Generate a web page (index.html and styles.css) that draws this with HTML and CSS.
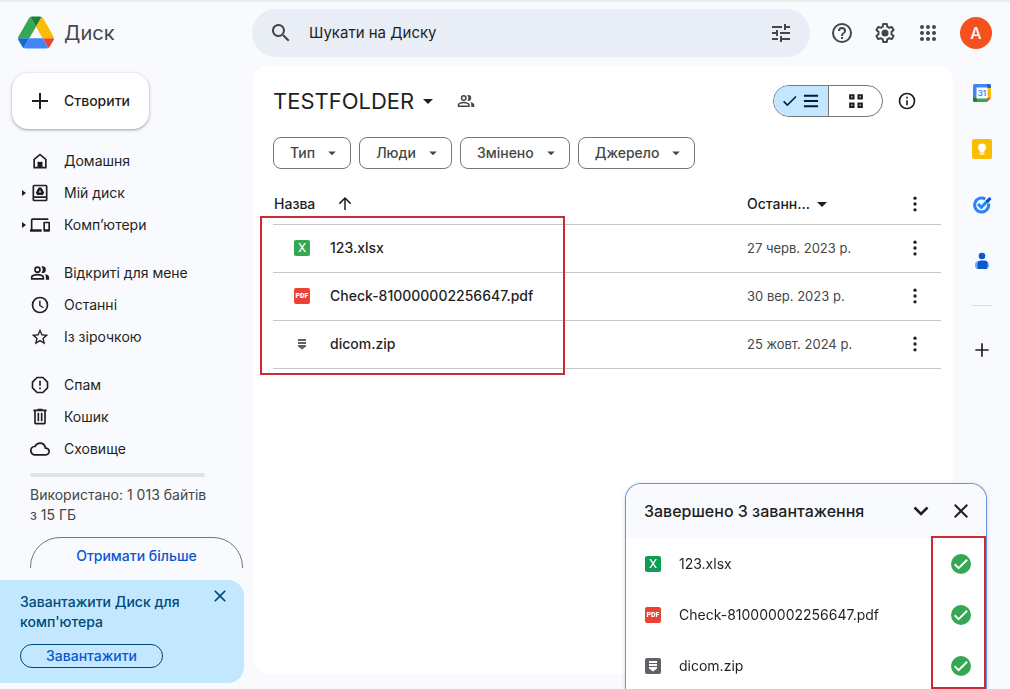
FILE: index.html
```html
<!DOCTYPE html>
<html lang="uk">
<head>
    <meta charset="UTF-8">
    <meta name="viewport" content="width=device-width, initial-scale=1.0">
    <title>TESTFOLDER – Диск</title>
    <link rel="stylesheet" href="styles.css">
</head>
<body>
    <!-- shared icons -->
    <svg class="sprite" aria-hidden="true">
        <symbol id="i-plus" viewBox="0 0 24 24"><path d="M20 13h-7v7h-2v-7H4v-2h7V4h2v7h7z"/></symbol>
        <symbol id="i-caret" viewBox="0 0 24 24"><path d="M7 10l5 5 5-5z"/></symbol>
        <symbol id="i-more" viewBox="0 0 24 24"><circle cx="12" cy="5" r="2"/><circle cx="12" cy="12" r="2"/><circle cx="12" cy="19" r="2"/></symbol>
        <symbol id="i-close" viewBox="0 0 24 24"><path d="M19 6.410L17.590 5 12 10.590 6.410 5 5 6.410 10.590 12 5 17.590 6.410 19 12 13.410 17.590 19 19 17.590 13.410 12z"/></symbol>
        <symbol id="i-people" viewBox="0 0 24 24"><path d="M9 4a4 4 0 1 0 0 8 4 4 0 0 0 0-8zm0 2a2 2 0 1 1 0 4 2 2 0 0 1 0-4zM9 13c-2.700 0-8 1.300-8 4v3h16v-3c0-2.700-5.300-4-8-4zm6 5H3v-1c0-.700 3.100-2 6-2s6 1.300 6 2zM15 12a4 4 0 0 0 0-8c-.500 0-.900.100-1.300.200a6 6 0 0 1 0 7.600c.400.100.800.200 1.300.200zM17.500 13.300c1 .900 1.500 2.100 1.500 3.700v3h4v-3c0-2-2.700-3.200-5.500-3.700z"/></symbol>
        <symbol id="i-archive" viewBox="0 0 16 16"><path d="M4 3h8v2H4zM4 6h8v2H4zM4 9h8v1.500L8 13.500l-4-3z"/></symbol>
        <symbol id="i-done" viewBox="0 0 20 20"><circle cx="10" cy="10" r="10" fill="#34a853"/><path d="M3.700 10.200l3.900 3.900 8.500-8.400" fill="none" stroke="#fff" stroke-width="2"/></symbol>
    </svg>

    <div class="app">
        <header class="topbar">
            <a class="brand" href="#">
                <svg viewBox="0 0 87.300 78" aria-hidden="true">
                    <path fill="#1967d2" d="m6.600 66.850 3.850 6.650c.8 1.400 1.950 2.500 3.300 3.300l13.750-23.800h-27.500c0 1.550.4 3.100 1.200 4.500z"/>
                    <path fill="#34a853" d="m43.650 25-13.750-23.800c-1.350.8-2.500 1.900-3.300 3.300l-25.400 44a9.060 9.060 0 0 0-1.200 4.500h27.500z"/>
                    <path fill="#ea4335" d="m73.550 76.800c1.350-.8 2.500-1.900 3.300-3.300l9.250-16c.8-1.400 1.200-2.950 1.200-4.500h-27.500z"/>
                    <path fill="#188038" d="m43.650 25 13.750-23.800c-1.350-.8-2.900-1.200-4.500-1.200h-18.500c-1.600 0-3.150.45-4.500 1.200z"/>
                    <path fill="#4285f4" d="m59.800 53h-32.300l-13.750 23.800c1.350.8 2.900 1.200 4.500 1.200h50.800c1.600 0 3.150-.45 4.500-1.200z"/>
                    <path fill="#fbbc04" d="m73.400 26.500-12.700-22c-.8-1.400-1.950-2.500-3.300-3.300l-13.750 23.800 16.150 28h27.450c0-1.550-.4-3.100-1.200-4.500z"/>
                </svg>
                <span>Диск</span>
            </a>
            <form class="search" role="search">
                <svg class="icon" viewBox="0 0 24 24" aria-hidden="true"><path d="M15.500 14h-.8l-.3-.3A6.500 6.500 0 1 0 13.700 14.400l.3.300v.8l5 5 1.500-1.500zm-6 0a4.500 4.500 0 1 1 0-9 4.500 4.500 0 0 1 0 9z"/></svg>
                <input type="text" placeholder="Шукати на Диску" aria-label="Шукати на Диску">
                <button type="button" class="icon-btn" aria-label="Розширений пошук">
                    <svg class="icon" viewBox="0 0 24 24"><path d="M3 17v2h6v-2zM3 5v2h10V5zm10 16v-2h8v-2h-8v-2h-2v6zM7 9v2H3v2h4v2h2V9zm14 4v-2H11v2zm-6-4h2V7h4V5h-4V3h-2z"/></svg>
                </button>
            </form>
            <div class="tools">
                <button class="icon-btn" aria-label="Підтримка">
                    <svg class="icon" viewBox="0 0 24 24"><path d="M11 18h2v-2h-2zm1-16a10 10 0 1 0 0 20 10 10 0 0 0 0-20zm0 18a8 8 0 1 1 0-16 8 8 0 0 1 0 16zm0-14a4 4 0 0 0-4 4h2a2 2 0 1 1 4 0c0 2-3 1.750-3 5h2c0-2.250 3-2.500 3-5a4 4 0 0 0-4-4z"/></svg>
                </button>
                <button class="icon-btn" aria-label="Налаштування">
                    <svg class="icon" viewBox="0 0 24 24"><path d="M10.200 3h3.600l.5 2.700 1.900 1.100 2.600-.9 1.800 3.100-2.100 1.800v2.400l2.100 1.800-1.800 3.100-2.600-.9-1.900 1.100-.5 2.700h-3.600l-.5-2.700-1.900-1.100-2.600.9-1.800-3.100 2.100-1.800v-2.400L3.400 9l1.800-3.100 2.600.9 1.900-1.100z" fill="none" stroke="currentColor" stroke-width="2" stroke-linejoin="round"/><circle cx="12" cy="12" r="3.500"/></svg>
                </button>
                <button class="icon-btn" aria-label="Додатки Google">
                    <svg class="icon" viewBox="0 0 24 24"><path d="M6 8a2 2 0 1 0 0-4 2 2 0 0 0 0 4zm6 0a2 2 0 1 0 0-4 2 2 0 0 0 0 4zm6 0a2 2 0 1 0 0-4 2 2 0 0 0 0 4zM6 14a2 2 0 1 0 0-4 2 2 0 0 0 0 4zm6 0a2 2 0 1 0 0-4 2 2 0 0 0 0 4zm6 0a2 2 0 1 0 0-4 2 2 0 0 0 0 4zM6 20a2 2 0 1 0 0-4 2 2 0 0 0 0 4zm6 0a2 2 0 1 0 0-4 2 2 0 0 0 0 4zm6 0a2 2 0 1 0 0-4 2 2 0 0 0 0 4z"/></svg>
                </button>
                <button class="avatar">A</button>
            </div>
        </header>

        <aside class="sidebar">
            <div class="sidebar-scroll">
                <button class="create"><svg class="icon"><use href="#i-plus"/></svg>Створити</button>
                <nav class="nav">
                    <ul>
                        <li><a href="#">
                            <svg class="icon-20" viewBox="0 0 24 24"><path d="M4 21V9.500L12 3l8 6.500V21zM6 19h12v-8.500l-6-5-6 5z"/><path d="M9 13h6v7H9z"/></svg>Домашня</a></li>
                        <li><a href="#" class="expandable">
                            <svg class="icon-20" viewBox="0 0 24 24"><path d="M5 2h14a2 2 0 0 1 2 2v16a2 2 0 0 1-2 2H5a2 2 0 0 1-2-2V4c0-1.100.9-2 2-2zm0 2v12h14V4zm0 14v2h14v-2z"/><path fill-rule="evenodd" d="M10.300 5.500h3.400l3.300 6-1.500 2.800h-7L7 11.500zM12 8.600l-1.500 2.900h3z"/></svg>Мій диск</a></li>
                        <li><a href="#" class="expandable">
                            <svg class="icon-20" viewBox="0 0 24 24"><path d="M3 6h19V4H3a2 2 0 0 0-2 2v11H0v3h14v-3H3zm20 2h-6c-.6 0-1 .4-1 1v10c0 .6.4 1 1 1h6c.6 0 1-.4 1-1V9c0-.6-.4-1-1-1zm-1 9h-4v-7h4z"/></svg>Комп’ютери</a></li>
                    </ul>
                    <ul>
                        <li><a href="#"><svg class="icon-20"><use href="#i-people"/></svg>Відкриті для мене</a></li>
                        <li><a href="#">
                            <svg class="icon-20" viewBox="0 0 24 24"><path d="M12 2a10 10 0 1 0 0 20 10 10 0 0 0 0-20zm0 18a8 8 0 1 1 0-16 8 8 0 0 1 0 16zm.700-13h-1.700v6l4.700 3 .9-1.400-3.900-2.400z"/></svg>Останні</a></li>
                        <li><a href="#">
                            <svg class="icon-20" viewBox="0 0 24 24"><path d="M22 9.240l-7.190-.62L12 2 9.190 8.630 2 9.240l5.460 4.730L5.820 21 12 17.270 18.180 21l-1.630-7.030zM12 15.400l-3.760 2.270 1-4.280-3.320-2.880 4.380-.38L12 6.100l1.710 4.040 4.380.38-3.320 2.880 1 4.280z"/></svg>Із зірочкою</a></li>
                    </ul>
                    <ul>
                        <li><a href="#">
                            <svg class="icon-20" viewBox="0 0 24 24"><path d="M8.500 3h7L21 8.500v7L15.500 21h-7L3 15.500v-7z" fill="none" stroke="currentColor" stroke-width="2" stroke-linejoin="round"/><path d="M11 7h2v6h-2zM11 15h2v2h-2z"/></svg>Спам</a></li>
                        <li><a href="#">
                            <svg class="icon-20" viewBox="0 0 24 24"><path d="M15 3V2H9v1H4v2h1v14a2 2 0 0 0 2 2h10a2 2 0 0 0 2-2V5h1V3zm2 16H7V5h10zM9 7h2v10H9zm4 0h2v10h-2z"/></svg>Кошик</a></li>
                        <li><a href="#">
                            <svg class="icon-20" viewBox="0 0 24 24"><path d="M19.350 10.040A7.490 7.490 0 0 0 12 4C9.110 4 6.600 5.640 5.350 8.040A5.994 5.994 0 0 0 0 14c0 3.310 2.690 6 6 6h13c2.760 0 5-2.240 5-5 0-2.640-2.050-4.780-4.650-4.960zM19 18H6a4 4 0 0 1-.4-7.970l1.070-.11.5-.95A5.469 5.469 0 0 1 12 6c2.620 0 4.880 1.860 5.390 4.430l.3 1.500 1.530.11A2.980 2.980 0 0 1 22 15c0 1.650-1.350 3-3 3z"/></svg>Сховище</a></li>
                    </ul>
                </nav>
                <div class="storage">
                    <div class="storage-bar"></div>
                    <p>Використано: 1 013 байтів з 15 ГБ</p>
                    <button class="get-more">Отримати більше</button>
                </div>
            </div>
            <section class="promo">
                <div class="promo-head">
                    <h2>Завантажити Диск для комп'ютера</h2>
                    <button class="icon-btn" aria-label="Закрити"><svg class="icon-20"><use href="#i-close"/></svg></button>
                </div>
                <button class="promo-btn">Завантажити</button>
            </section>
        </aside>

        <main class="content">
            <div class="content-head">
                <button class="folder">TESTFOLDER<svg class="icon"><use href="#i-caret"/></svg></button>
                <button class="icon-btn shared" aria-label="Керувати доступом"><svg class="icon-18"><use href="#i-people"/></svg></button>
                <div class="view-toggle">
                    <button class="active" aria-label="Список">
                        <svg class="icon-18" viewBox="0 0 24 24"><path d="M3.500 12.500l5 5L20 6" fill="none" stroke="currentColor" stroke-width="2"/></svg>
                        <svg class="icon-20" viewBox="0 0 24 24"><path d="M3.500 4.500h17v2.400h-17zM3.500 10.800h17v2.400h-17zM3.500 17.100h17v2.400h-17z"/></svg>
                    </button>
                    <button aria-label="Сітка">
                        <svg class="icon-20" viewBox="0 0 24 24"><path d="M5 5h4v4H5zM15 5h4v4h-4zM5 15h4v4H5zM15 15h4v4h-4z" fill="none" stroke="currentColor" stroke-width="2.500"/></svg>
                    </button>
                </div>
                <button class="icon-btn" aria-label="Докладніше">
                    <svg class="icon-20" viewBox="0 0 24 24"><path d="M11 7h2v2h-2zm0 4h2v6h-2zm1-9a10 10 0 1 0 0 20 10 10 0 0 0 0-20zm0 18a8 8 0 1 1 0-16 8 8 0 0 1 0 16z"/></svg>
                </button>
            </div>

            <div class="filters">
                <button>Тип<svg class="icon-18"><use href="#i-caret"/></svg></button>
                <button>Люди<svg class="icon-18"><use href="#i-caret"/></svg></button>
                <button>Змінено<svg class="icon-18"><use href="#i-caret"/></svg></button>
                <button>Джерело<svg class="icon-18"><use href="#i-caret"/></svg></button>
            </div>

            <div class="files">
                <table>
                    <thead>
                        <tr>
                            <th class="col-name"><span class="sort">Назва<svg class="icon-18" viewBox="0 0 24 24"><path d="M12 20V4M4.500 11.500L12 4l7.500 7.500" fill="none" stroke="currentColor" stroke-width="2"/></svg></span></th>
                            <th class="col-date"><span class="sort-date">Останн...<svg class="icon"><use href="#i-caret"/></svg></span></th>
                            <th class="col-more"><button class="icon-btn" aria-label="Інші дії"><svg class="icon-20"><use href="#i-more"/></svg></button></th>
                        </tr>
                    </thead>
                    <tbody>
                        <tr>
                            <td><span class="file"><span class="badge xlsx">X</span>123.xlsx</span></td>
                            <td class="date">27 черв. 2023 р.</td>
                            <td><button class="icon-btn" aria-label="Інші дії"><svg class="icon-20"><use href="#i-more"/></svg></button></td>
                        </tr>
                        <tr>
                            <td><span class="file"><span class="badge pdf">PDF</span>Check-810000002256647.pdf</span></td>
                            <td class="date">30 вер. 2023 р.</td>
                            <td><button class="icon-btn" aria-label="Інші дії"><svg class="icon-20"><use href="#i-more"/></svg></button></td>
                        </tr>
                        <tr>
                            <td><span class="file"><span class="badge zip"><svg><use href="#i-archive"/></svg></span>dicom.zip</span></td>
                            <td class="date">25 жовт. 2024 р.</td>
                            <td><button class="icon-btn" aria-label="Інші дії"><svg class="icon-20"><use href="#i-more"/></svg></button></td>
                        </tr>
                    </tbody>
                </table>
                <div class="mark mark-files"></div>
            </div>
        </main>

        <aside class="apps">
            <a href="#" aria-label="Календар">
                <svg class="icon-20" viewBox="0 0 20 20">
                    <path fill="#4285f4" d="M2 1h13v4H5v10H1V2z"/>
                    <path fill="#1967d2" d="M15 1h3l1 1v3h-4z"/>
                    <path fill="#fbbc04" d="M15 5h4v10h-4z"/>
                    <path fill="#34a853" d="M5 15h10v4H5z"/>
                    <path fill="#188038" d="M1 15h4v4H2l-1-1z"/>
                    <path fill="#ea4335" d="M15 15h4l-4 4z"/>
                    <path fill="#fff" d="M4.500 4.500h11v11h-11z"/>
                    <text x="10" y="13" text-anchor="middle" font-size="8" font-weight="600" fill="#4285f4">31</text>
                </svg>
            </a>
            <a href="#" aria-label="Keep">
                <svg class="icon-20" viewBox="0 0 20 20">
                    <rect width="20" height="20" rx="2" fill="#fbbc04"/>
                    <path fill="#fff" d="M10 4.500a4 4 0 0 0-2.300 7.300V13.500h4.600v-1.700A4 4 0 0 0 10 4.500zM7.700 14.200h4.600v1.300H7.700z"/>
                </svg>
            </a>
            <a href="#" aria-label="Завдання">
                <svg class="icon-20" viewBox="0 0 20 20">
                    <path d="M16.500 8.500A7 7 0 1 1 13.300 4" fill="none" stroke="#2684fc" stroke-width="3"/>
                    <path d="M6 9l3.300 3.300L16 5.500" fill="none" stroke="#2684fc" stroke-width="3"/>
                    <path d="M13.500 5.700l4-3.700 2 2-3.500 4.200z" fill="#0057cc"/>
                </svg>
            </a>
            <a href="#" aria-label="Контакти">
                <svg class="icon-20" viewBox="0 0 20 20">
                    <circle cx="10" cy="5" r="3.300" fill="#0b57d0"/>
                    <path fill="#7baaf7" d="M7 10h6a4 4 0 0 1 4 4v2l-2 2H5l-2-2v-2a4 4 0 0 1 4-4z"/>
                    <path fill="#0b57d0" d="M8 9.500h4.500a3 3 0 0 1 3 3V16l-1 2H5.500v-5.500a3 3 0 0 1 2.500-3z"/>
                </svg>
            </a>
            <hr>
            <button class="icon-btn" aria-label="Установити доповнення"><svg class="icon-20"><use href="#i-plus"/></svg></button>
        </aside>
    </div>

    <section class="uploads">
        <header>
            <h2>Завершено 3 завантаження</h2>
            <button class="icon-btn" aria-label="Згорнути">
                <svg class="icon" viewBox="0 0 24 24"><path d="M5.500 8.500L12 15l6.500-6.500" fill="none" stroke="currentColor" stroke-width="2.500"/></svg>
            </button>
            <button class="icon-btn" aria-label="Закрити"><svg class="icon"><use href="#i-close"/></svg></button>
        </header>
        <ul>
            <li><span class="badge xlsx-dark">X</span><span class="name">123.xlsx</span><svg class="icon-20"><use href="#i-done"/></svg></li>
            <li><span class="badge pdf">PDF</span><span class="name">Check-810000002256647.pdf</span><svg class="icon-20"><use href="#i-done"/></svg></li>
            <li><span class="badge zip-dark"><svg><use href="#i-archive"/></svg></span><span class="name">dicom.zip</span><svg class="icon-20"><use href="#i-done"/></svg></li>
        </ul>
        <div class="mark mark-status"></div>
    </section>
</body>
</html>
```
FILE: styles.css
```css
:root {
    --page: #f8fafd;
    --text: #1f1f1f;
    --muted: #444746;
    --outline: #747775;
    --link: #0b57d0;
    --sky: #c2e7ff;
    --navy: #004a77;
    --mark: #cc2a32;
}

* {
    box-sizing: border-box;
}

body {
    margin: 0;
    background: var(--page);
    color: var(--text);
    font-family: Inter, 'Open Sans', 'Liberation Sans', sans-serif;
    font-size: 14px;
    line-height: 20px;
}

button, input {
    font: inherit;
    color: inherit;
}

button {
    background: none;
    border: none;
    padding: 0;
    cursor: pointer;
}

a {
    color: inherit;
    text-decoration: none;
}

ul {
    list-style: none;
    margin: 0;
    padding: 0;
}

h2, p {
    margin: 0;
}

svg {
    fill: currentColor;
    flex: none;
}

.sprite {
    display: none;
}

.icon {
    width: 24px;
    height: 24px;
}

.icon-20 {
    width: 20px;
    height: 20px;
}

.icon-18 {
    width: 18px;
    height: 18px;
}

.icon-btn {
    display: flex;
    align-items: center;
    justify-content: center;
    flex: none;
}

.app {
    display: grid;
    grid-template-columns: 253px 1fr 57px;
    grid-template-rows: 65px 1fr;
    height: 100vh;
    overflow: hidden;
}

/* top bar */
.topbar {
    grid-column: 1 / -1;
    display: flex;
    align-items: center;
    border-top: 2px solid #eceef1;
    padding: 0 18px 2px;
}

.brand {
    display: flex;
    align-items: center;
    gap: 10px;
    width: 234px;
    color: var(--muted);
    font-size: 20px;
}

.brand svg {
    width: 36px;
    height: 33px;
}

.search {
    flex: 1;
    display: flex;
    align-items: center;
    gap: 16px;
    height: 48px;
    padding: 0 17px;
    border-radius: 24px;
    background: #e9eef6;
    color: var(--muted);
}

.search input {
    flex: 1;
    min-width: 0;
    border: none;
    padding: 0;
    background: none;
    font-size: 15px;
    outline: none;
}

.search input::placeholder {
    color: var(--text);
    opacity: 1;
}

.tools {
    display: flex;
    align-items: center;
    gap: 19px;
    margin-left: 20px;
    color: var(--muted);
}

.avatar {
    width: 32px;
    height: 32px;
    margin-left: 1px;
    border-radius: 50%;
    background: #f4511e;
    color: #fff;
    font-size: 16px;
    font-weight: 500;
}

/* sidebar */
.sidebar {
    display: flex;
    flex-direction: column;
    gap: 12px;
    min-height: 0;
    padding-bottom: 6px;
}

.sidebar-scroll {
    flex: 1;
    min-height: 0;
    overflow: hidden;
    padding: 8px 10px 0 12px;
}

.create {
    display: flex;
    align-items: center;
    gap: 12px;
    height: 56px;
    padding: 0 19px 0 16px;
    border-radius: 16px;
    background: #fff;
    box-shadow: 0 1px 2px rgba(60,64,67,.3), 0 1px 3px 1px rgba(60,64,67,.15);
    font-weight: 500;
}

.nav {
    display: flex;
    flex-direction: column;
    gap: 16px;
    margin-top: 16px;
}

.nav a {
    display: flex;
    align-items: center;
    gap: 14px;
    height: 32px;
    padding-left: 18px;
}

.nav .expandable {
    padding-left: 10px;
    gap: 4px;
}

.nav .expandable svg {
    margin-right: 10px;
}

.nav .expandable::before {
    content: '';
    border: 3px solid transparent;
    border-left: 4px solid currentColor;
    border-right: none;
}

.storage {
    padding: 8px 0 0 18px;
}

.storage-bar {
    width: 175px;
    height: 4px;
    border-radius: 2px;
    background: #e1e3e1;
}

.storage p {
    width: 180px;
    margin-top: 8px;
    color: var(--muted);
}

.get-more {
    width: 100%;
    height: 60px;
    margin-top: 12px;
    padding-bottom: 22px;
    border: 1px solid var(--outline);
    border-radius: 30px;
    color: var(--link);
    font-weight: 500;
}

.promo {
    margin-right: 9px;
    padding: 8px 16px 15px 20px;
    border-radius: 0 16px 16px 0;
    background: var(--sky);
    color: var(--navy);
}

.promo-head {
    display: flex;
    justify-content: space-between;
    align-items: flex-start;
}

.promo h2 {
    width: 165px;
    padding-top: 4px;
    font-size: 14px;
    font-weight: 500;
}

.promo-head .icon-btn {
    width: 16px;
    height: 16px;
}

.promo-btn {
    height: 24px;
    margin-top: 12px;
    padding: 0 25px;
    border: 1px solid var(--navy);
    border-radius: 12px;
    color: var(--link);
    font-weight: 500;
}

/* file list */
.content {
    margin-bottom: 15px;
    padding: 20px 12px 0 20px;
    border-radius: 16px;
    background: #fff;
}

.content-head {
    display: flex;
    align-items: center;
    height: 32px;
    padding-right: 24px;
}

.folder {
    display: flex;
    align-items: center;
    gap: 2px;
    font-size: 22px;
}

.shared {
    margin: 0 auto 0 17px;
    color: var(--muted);
}

.view-toggle {
    display: flex;
    height: 32px;
    margin-right: 14px;
    border: 1px solid var(--outline);
    border-radius: 16px;
    overflow: hidden;
}

.view-toggle button {
    display: flex;
    align-items: center;
    justify-content: center;
    gap: 2px;
    width: 53px;
}

.view-toggle .active {
    width: 55px;
    border-right: 1px solid var(--outline);
    background: var(--sky);
    color: #001d35;
}

.filters {
    display: flex;
    gap: 8px;
    margin-top: 20px;
}

.filters button {
    display: flex;
    align-items: center;
    gap: 8px;
    height: 32px;
    padding: 0 9px 0 16px;
    border: 1px solid var(--outline);
    border-radius: 8px;
    color: var(--muted);
    font-weight: 500;
}

.files {
    position: relative;
    margin-top: 15px;
}

.files table {
    width: 100%;
    border-collapse: collapse;
    table-layout: fixed;
}

.files th, .files td {
    height: 48px;
    padding: 0;
    border-bottom: 1px solid #c7c7c7;
    text-align: left;
}

.files th {
    height: 40px;
    font-weight: 500;
}

.files .col-date {
    width: 158px;
}

.files .col-more {
    width: 36px;
}

.sort, .sort-date, .file {
    display: flex;
    align-items: center;
}

.sort {
    gap: 21px;
    padding-left: 1px;
}

.file {
    gap: 20px;
    padding-left: 21px;
    font-weight: 500;
}

.files .date {
    color: var(--muted);
    font-size: 13px;
}

.badge {
    display: flex;
    align-items: center;
    justify-content: center;
    width: 16px;
    height: 16px;
    border-radius: 2px;
    color: #fff;
    font: 400 13px/16px Roboto, sans-serif;
}

.badge svg {
    width: 16px;
    height: 16px;
}

.xlsx {
    background: #34a853;
}

.xlsx-dark {
    background: #0f9d58;
}

.pdf {
    background: #ea4335;
    font-size: 7px;
    font-weight: 900;
}

.zip {
    color: #5f6368;
}

.zip-dark {
    background: #5f6368;
}

/* red highlight frames */
.mark {
    position: absolute;
    border: 2px solid var(--mark);
    pointer-events: none;
}

.mark-files {
    top: 32px;
    bottom: -6px;
    left: -13px;
    width: 305px;
}

.mark-status {
    top: 52px;
    right: 0;
    bottom: 0;
    width: 55px;
}

/* side panel */
.apps {
    display: flex;
    flex-direction: column;
    align-items: center;
    gap: 36px;
    padding-top: 18px;
}

.apps a {
    height: 20px;
}

.apps hr {
    width: 20px;
    margin: -2px 0;
    border: none;
    border-top: 1px solid #dadce0;
}

/* upload panel */
.uploads {
    position: fixed;
    right: 23px;
    bottom: 0;
    width: 362px;
    border: 1px solid #6396dc;
    border-bottom: none;
    border-radius: 16px 16px 0 0;
    background: #fff;
    box-shadow: 0 1px 4px rgba(60,64,67,.2);
}

.uploads header {
    display: flex;
    align-items: center;
    gap: 16px;
    height: 54px;
    padding: 0 13px 0 18px;
    border-radius: 16px 16px 0 0;
    background: var(--page);
}

.uploads h2 {
    flex: 1;
    font-size: 16px;
    font-weight: 500;
}

.uploads ul {
    max-height: 151px;
    overflow: hidden;
}

.uploads li {
    display: flex;
    align-items: center;
    gap: 18px;
    height: 51px;
    padding: 0 15px 0 19px;
}

.uploads .name {
    flex: 1;
}
```
